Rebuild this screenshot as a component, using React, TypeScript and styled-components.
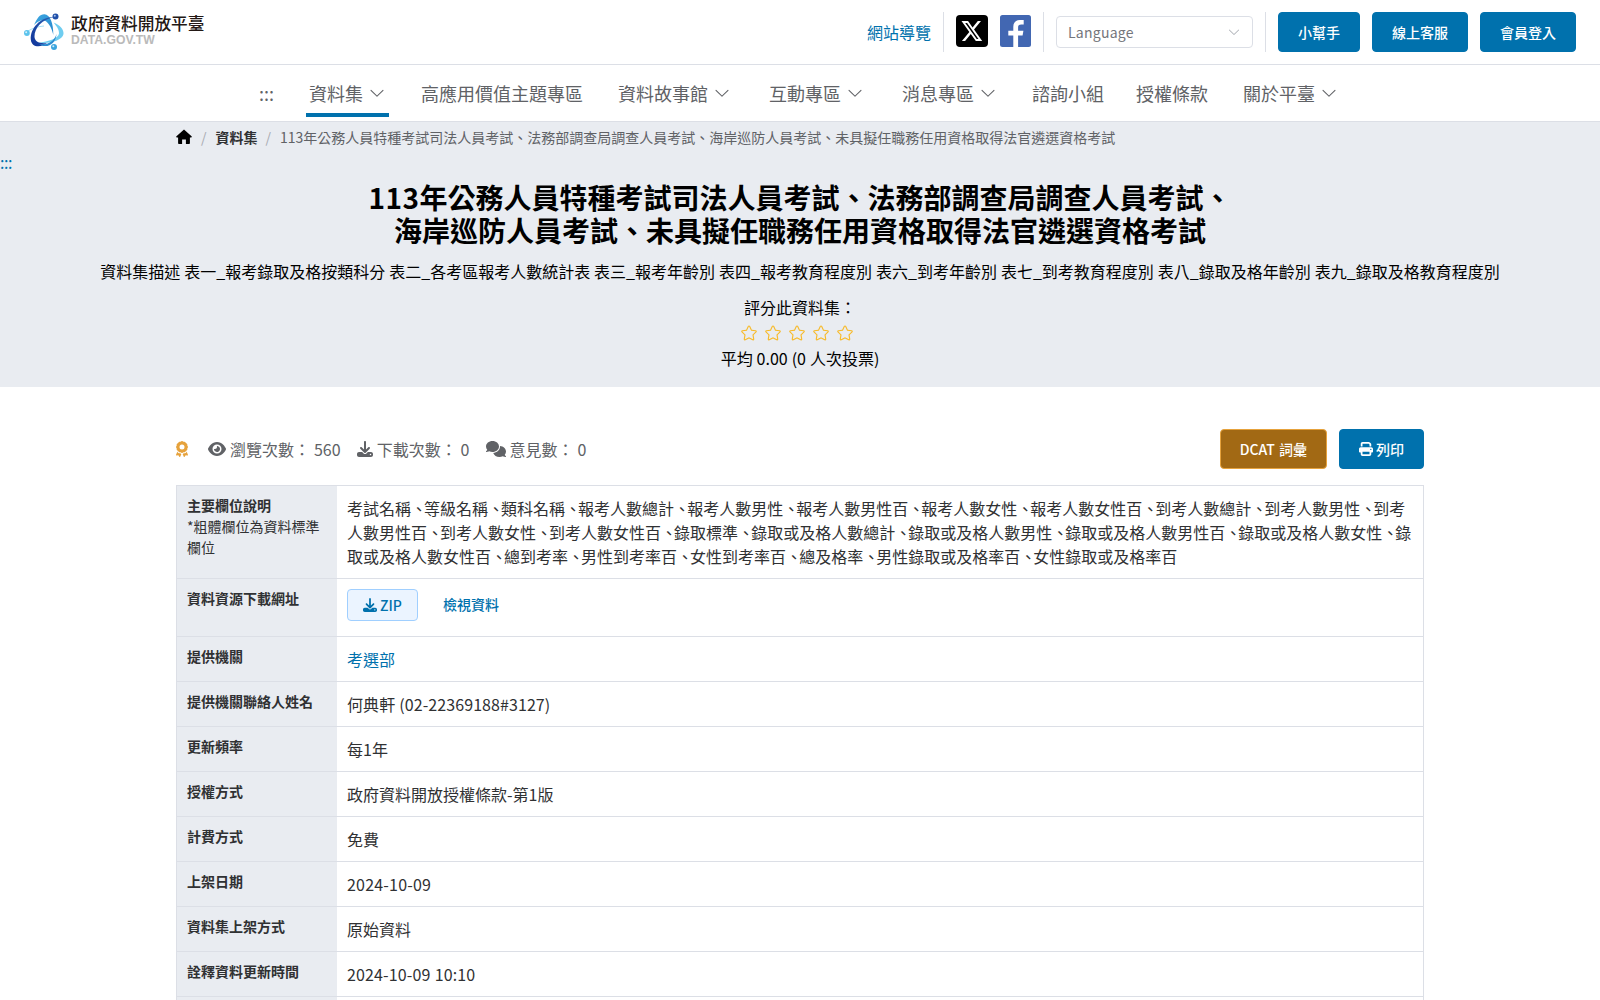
import React from "react";
import styled, { createGlobalStyle, css } from "styled-components";
import { FaAward, FaComments, FaDownload, FaEye, FaPrint } from "react-icons/fa6";

const blue = "#0071ad";
const line = "#dcdfe6";
const panel = "#e9ecf1";

const GlobalStyle = createGlobalStyle`
  *, *::before, *::after { box-sizing: border-box; }
  html, body { margin: 0; padding: 0; }
  body {
    font-family: "Noto Sans CJK TC", sans-serif;
    font-size: 16px;
    line-height: 24px;
    word-spacing: 0.4px;
    color: #303133;
    background: #fff;
    overflow: hidden;
  }
  a { color: inherit; text-decoration: none; }
  svg { display: block; flex: none; }
`;

const Page = styled.div`
  height: 1000px;
  overflow: hidden;
`;

const TopBar = styled.header`
  height: 65px;
  border-bottom: 1px solid ${line};
  display: flex;
  align-items: flex-start;
  justify-content: space-between;
  padding: 12px 24px 0;
`;

const Brand = styled.a`
  display: flex;
  gap: 5px;
`;

const BrandText = styled.div`
  display: flex;
  flex-direction: column;
`;

const BrandName = styled.span`
  font-size: 16.7px;
  line-height: 22px;
  font-weight: 500;
  color: #231815;
`;

const BrandDomain = styled.span`
  font: bold 12.2px/13px "Liberation Sans", Arial, sans-serif;
  color: #bababa;
`;

const Tools = styled.div`
  display: flex;
  align-items: center;
  height: 40px;
`;

const SiteMap = styled.a`
  color: ${blue};
`;

const Divider = styled.i`
  width: 1px;
  height: 40px;
  margin: 0 12px;
  background: ${line};
`;

const Socials = styled.div`
  display: flex;
  gap: 12px;
  margin-bottom: 2px;
`;

const Select = styled.div`
  width: 197px;
  height: 32px;
  border: 1px solid ${line};
  border-radius: 4px;
  padding: 0 11px;
  display: flex;
  align-items: center;
  justify-content: space-between;
  font-size: 14px;
  letter-spacing: 0.25px;
  color: #74767c;
`;

const Button = styled.button<{ $tone?: "amber" | "plain"; $small?: boolean }>`
  height: 40px;
  padding: 0 19px;
  border: 1px solid ${blue};
  border-radius: 4px;
  background: ${blue};
  color: #fff;
  font: 500 14px/14px "Noto Sans CJK TC", sans-serif;
  display: inline-flex;
  align-items: center;
  justify-content: center;
  gap: 3px;
  ${(p) => p.$tone === "amber" && css`
    background: #a26914;
    border-color: #e6a23c;
    word-spacing: 1px;
  `}
  ${(p) => p.$tone === "plain" && css`
    background: #ebf4ff;
    border-color: #a0cfff;
    color: ${blue};
  `}
  ${(p) => p.$small && css`
    height: 32px;
    padding: 0 15px;
  `}
`;

const ButtonRow = styled.div`
  display: flex;
  gap: 12px;
`;

const Nav = styled.nav`
  height: 57px;
  border-bottom: 1px solid ${line};
  display: flex;
  justify-content: center;
  gap: 32px;
  padding-top: 5px;
  font-size: 18px;
  color: #606266;
`;

const NavItem = styled.a<{ $menu?: boolean; $active?: boolean }>`
  height: 47px;
  display: flex;
  align-items: center;
  gap: 5px;
  padding: 2px ${(p) => (p.$menu ? 3 : 0)}px 0;
  border-bottom: 4px solid ${(p) => (p.$active ? blue : "transparent")};
`;

const Hero = styled.section`
  height: 265px;
  background: ${panel};
  color: #000;
  text-align: center;
`;

const Crumbs = styled.div`
  width: 1248px;
  margin: 0 auto;
  height: 30px;
  display: flex;
  align-items: center;
  font-size: 14px;
  line-height: 14px;
  color: #606266;
`;

const CrumbSlash = styled.span`
  margin: 0 9px;
  color: #a8abb2;
`;

const CrumbLink = styled.a`
  margin-right: -1px;
  font-weight: 700;
  color: #303133;
`;

const Anchor = styled.a`
  display: block;
  height: 21px;
  line-height: 21px;
  text-align: left;
  letter-spacing: -0.4px;
  color: ${blue};
`;

const Title = styled.h1`
  margin: 8px 0 0;
  font-size: 28px;
  line-height: 33px;
  font-weight: 700;
`;

const TitleYear = styled.span`
  letter-spacing: 0.4px;
`;

const Description = styled.p`
  margin: 12px 0 0;
`;

const Rating = styled.div`
  margin-top: 12px;
`;

const Stars = styled.div`
  display: flex;
  justify-content: center;
  gap: 6px;
  height: 27px;
  padding-right: 6px;
  align-items: center;
`;

const Content = styled.main`
  width: 1248px;
  margin: 42px auto 0;
`;

const Stats = styled.div`
  display: flex;
  align-items: center;
  justify-content: space-between;
  color: #606266;
`;

const StatList = styled.div`
  display: flex;
  align-items: center;
  gap: 16px;
`;

const Stat = styled.span`
  display: flex;
  align-items: center;
  gap: 4px;
`;

const Medal = styled.span`
  color: #e6a23c;
  margin-right: 4px;
`;

const Table = styled.div`
  margin-top: 16px;
  border: 1px solid ${line};
`;

const Row = styled.div`
  display: grid;
  grid-template-columns: 160px 1fr;
  & + & { border-top: 1px solid ${line}; }
`;

const Label = styled.div`
  background: ${panel};
  padding: 9px 10px 11px;
  font-size: 14px;
  line-height: 21px;
`;

const LabelName = styled.div`
  font-weight: 700;
`;

const Value = styled.div<{ $spacing?: number }>`
  padding: 10px;
  letter-spacing: ${(p) => p.$spacing ?? 0}px;
`;

const Field = styled.span`
  &:not(:last-child)::after {
    content: "、";
    letter-spacing: -3px;
  }
`;

const Link = styled.a`
  color: ${blue};
`;

const Resource = styled.div`
  display: flex;
  align-items: flex-start;
  gap: 25px;
  height: 37px;
`;

const ViewLink = styled.a`
  color: ${blue};
  font-size: 14px;
  font-weight: 500;
  line-height: 30px;
`;

const LogoMark = () => (
  <svg width="42" height="38" viewBox="0 0 42 38">
    <defs>
      <linearGradient id="top" x1="0" y1="0" x2="1" y2="1">
        <stop offset="0" stopColor="#3fa9e2" />
        <stop offset="1" stopColor="#2486cc" />
      </linearGradient>
      <linearGradient id="deep" x1="1" y1="0" x2="0" y2="1">
        <stop offset="0" stopColor="#2c62b4" />
        <stop offset="1" stopColor="#10349a" />
      </linearGradient>
    </defs>
    <path d="M10 13C13 6 16 2 20.500 2.200C26 2.500 29.500 11 29.300 23C27.500 15 23.500 8.500 19 8.300C15.500 8.200 12.500 10.500 10 13Z" fill="url(#top)" />
    <path d="M4 19C9 16 14 14.500 20 14" fill="none" stroke="#8bd5f3" strokeWidth=".8" />
    <path d="M29.500 10.500C36 13 40 17.500 39.500 22C38.500 28 28 31.500 14 31C25 29 34.500 26.500 35 21.500C35.200 17.500 32.500 14 29.500 10.500Z" fill="#6fcdf0" />
    <path d="M31 5C18 7 10.500 16 10.500 24.500C10.500 29.500 15.500 32 23 31C16.500 36.200 7.500 35.500 6.800 27.500C6 16 17 4 31 5Z" fill="url(#deep)" />
    <path d="M15 32C23 33.500 30 30 32.500 22C32 29.500 27 35 19 34Z" fill="#2b8bd0" />
    <circle cx="31.500" cy="4.500" r="3" fill="#204fa8" />
    <circle cx="2.900" cy="21" r="2.900" fill="#5cc3ec" />
    <circle cx="30" cy="35" r="3" fill="#3ba4dd" />
    <circle cx="30.800" cy="3.700" r="1" fill="#a9c3ea" />
    <circle cx="2.200" cy="20.200" r="1" fill="#d5f1fc" />
    <circle cx="29.300" cy="34.200" r="1" fill="#c8eafa" />
  </svg>
);

const XIcon = () => (
  <svg width="32" height="32" viewBox="0 0 32 32">
    <rect width="32" height="32" rx="4" fill="#000" />
    <g transform="translate(4.300 6) scale(.96 1.030)">
      <path
        fill="#fff"
        d="M18.244 0h3.308l-7.227 8.260 8.502 11.240H16.170l-5.214-6.817L4.990 19.500H1.680l7.730-8.835L1.254 0H8.080l4.713 6.231zm-1.161 17.520h1.833L7.084 1.876H5.117z"
      />
    </g>
  </svg>
);

const FacebookIcon = () => (
  <svg width="31" height="32" viewBox="0 0 31 32">
    <rect width="31" height="32" rx="2.500" fill="#4267b2" />
    <path
      fill="#fff"
      d="M13.300 32V20.500H8.300V15.800H13.300V11.800C13.300 7.400 15.800 5 19.800 5H23.700V9.400H21.300C18.900 9.400 18.100 10.400 18.100 12.200V15.800H23.400L22.600 20.500H18.100V32Z"
    />
  </svg>
);

const Chevron = ({ size, color = "currentColor" }: { size: number; color?: string }) => (
  <svg width={size} height={size} viewBox="0 0 1024 1024" fill={color}>
    <path d="M831.872 340.864 512 652.672 192.128 340.864a30.592 30.592 0 0 0-42.752 0 29.120 29.120 0 0 0 0 41.600L489.664 714.240a32 32 0 0 0 44.672 0l340.288-331.712a29.120 29.120 0 0 0 0-41.728 30.592 30.592 0 0 0-42.752 0z" />
  </svg>
);

const HomeIcon = () => (
  <svg width="16" height="16" viewBox="0 0 16 16">
    <path d="M8 .6 15.800 7.600Q16 8.600 15 8.600H13.900V14.200Q13.900 15 13.100 15H9.900V10.500H6.100V15H2.900Q2.100 15 2.100 14.200V8.600H1Q0 8.600.2 7.600Z" fill="#000" />
  </svg>
);

const Star = () => (
  <svg width="18" height="18" viewBox="0 0 1024 1024" fill="#f7ba2a">
    <path d="m512 747.840 228.160 119.936a6.400 6.400 0 0 0 9.280-6.720l-43.520-254.080 184.512-179.904a6.400 6.400 0 0 0-3.520-10.880l-255.104-37.120L517.760 147.904a6.400 6.400 0 0 0-11.520 0L392.192 379.072l-255.104 37.120a6.400 6.400 0 0 0-3.520 10.880L318.080 606.976l-43.584 254.080a6.400 6.400 0 0 0 9.280 6.720zM313.600 924.480a70.400 70.400 0 0 1-102.144-74.240l37.888-220.928L88.960 472.960A70.400 70.400 0 0 1 128 352.896l221.760-32.256 99.200-200.960a70.400 70.400 0 0 1 126.208 0l99.200 200.960 221.824 32.256a70.400 70.400 0 0 1 39.040 120.064L774.720 629.376l37.888 220.928a70.400 70.400 0 0 1-102.144 74.240L512 820.096l-198.400 104.320z" />
  </svg>
);

const menu = [
  { text: ":::" },
  { text: "資料集", menu: true, active: true },
  { text: "高應用價值主題專區" },
  { text: "資料故事館", menu: true },
  { text: "互動專區", menu: true },
  { text: "消息專區", menu: true },
  { text: "諮詢小組" },
  { text: "授權條款" },
  { text: "關於平臺", menu: true },
];

const fields = [
  "考試名稱", "等級名稱", "類科名稱", "報考人數總計", "報考人數男性", "報考人數男性百", "報考人數女性",
  "報考人數女性百", "到考人數總計", "到考人數男性", "到考人數男性百", "到考人數女性", "到考人數女性百",
  "錄取標準", "錄取或及格人數總計", "錄取或及格人數男性", "錄取或及格人數男性百", "錄取或及格人數女性",
  "錄取或及格人數女性百", "總到考率", "男性到考率百", "女性到考率百", "總及格率", "男性錄取或及格率百",
  "女性錄取或及格率百",
];

const details: { name: string; value: React.ReactNode; spacing?: number }[] = [
  { name: "提供機關", value: <Link>考選部</Link> },
  { name: "提供機關聯絡人姓名", value: "何典軒 (02-22369188#3127)", spacing: 0.08 },
  { name: "更新頻率", value: "每1年" },
  { name: "授權方式", value: "政府資料開放授權條款-第1版" },
  { name: "計費方式", value: "免費" },
  { name: "上架日期", value: "2024-10-09", spacing: 0.2 },
  { name: "資料集上架方式", value: "原始資料" },
  { name: "詮釋資料更新時間", value: "2024-10-09 10:10", spacing: 0.14 },
];

export default function App() {
  return (
    <Page>
      <GlobalStyle />
      <TopBar>
        <Brand>
          <LogoMark />
          <BrandText>
            <BrandName>政府資料開放平臺</BrandName>
            <BrandDomain>DATA.GOV.TW</BrandDomain>
          </BrandText>
        </Brand>
        <Tools>
          <SiteMap>網站導覽</SiteMap>
          <Divider />
          <Socials>
            <XIcon />
            <FacebookIcon />
          </Socials>
          <Divider />
          <Select>
            Language
            <Chevron size={14} color="#a8abb2" />
          </Select>
          <Divider />
          <ButtonRow>
            <Button>小幫手</Button>
            <Button>線上客服</Button>
            <Button>會員登入</Button>
          </ButtonRow>
        </Tools>
      </TopBar>
      <Nav>
        {menu.map((item) => (
          <NavItem key={item.text} $menu={item.menu} $active={item.active}>
            {item.text}
            {item.menu && <Chevron size={18} />}
          </NavItem>
        ))}
      </Nav>
      <Hero>
        <Crumbs>
          <HomeIcon />
          <CrumbSlash>/</CrumbSlash>
          <CrumbLink>資料集</CrumbLink>
          <CrumbSlash>/</CrumbSlash>
          113年公務人員特種考試司法人員考試、法務部調查局調查人員考試、海岸巡防人員考試、未具擬任職務任用資格取得法官遴選資格考試
        </Crumbs>
        <Anchor>:::</Anchor>
        <Title>
          <TitleYear>113</TitleYear>年公務人員特種考試司法人員考試、法務部調查局調查人員考試、
          <br />
          海岸巡防人員考試、未具擬任職務任用資格取得法官遴選資格考試
        </Title>
        <Description>
          資料集描述 表一_報考錄取及格按類科分 表二_各考區報考人數統計表 表三_報考年齡別 表四_報考教育程度別 表六_到考年齡別 表七_到考教育程度別 表八_錄取及格年齡別 表九_錄取及格教育程度別
        </Description>
        <Rating>
          評分此資料集：
          <Stars>
            {[1, 2, 3, 4, 5].map((n) => (
              <Star key={n} />
            ))}
          </Stars>
          平均 0.00 (0 人次投票)
        </Rating>
      </Hero>
      <Content>
        <Stats>
          <StatList>
            <Medal>
              <FaAward size={16} style={{ width: 12 }} />
            </Medal>
            <Stat>
              <FaEye size={18} />
              瀏覽次數： 560
            </Stat>
            <Stat>
              <FaDownload size={16} />
              下載次數： 0
            </Stat>
            <Stat>
              <FaComments size={20} />
              意見數： 0
            </Stat>
          </StatList>
          <ButtonRow>
            <Button $tone="amber">DCAT 詞彙</Button>
            <Button>
              <FaPrint size={14} />
              列印
            </Button>
          </ButtonRow>
        </Stats>
        <Table>
          <Row>
            <Label>
              <LabelName>主要欄位說明</LabelName>
              *粗體欄位為資料標準欄位
            </Label>
            <Value>
              {fields.map((f) => (
                <Field key={f}>{f}</Field>
              ))}
            </Value>
          </Row>
          <Row>
            <Label>
              <LabelName>資料資源下載網址</LabelName>
            </Label>
            <Value>
              <Resource>
                <Button $tone="plain" $small>
                  <FaDownload size={14} />
                  ZIP
                </Button>
                <ViewLink>檢視資料</ViewLink>
              </Resource>
            </Value>
          </Row>
          {details.map((d) => (
            <Row key={d.name}>
              <Label>
                <LabelName>{d.name}</LabelName>
              </Label>
              <Value $spacing={d.spacing}>{d.value}</Value>
            </Row>
          ))}
          <Row>
            <Label />
            <Value />
          </Row>
        </Table>
      </Content>
    </Page>
  );
}
